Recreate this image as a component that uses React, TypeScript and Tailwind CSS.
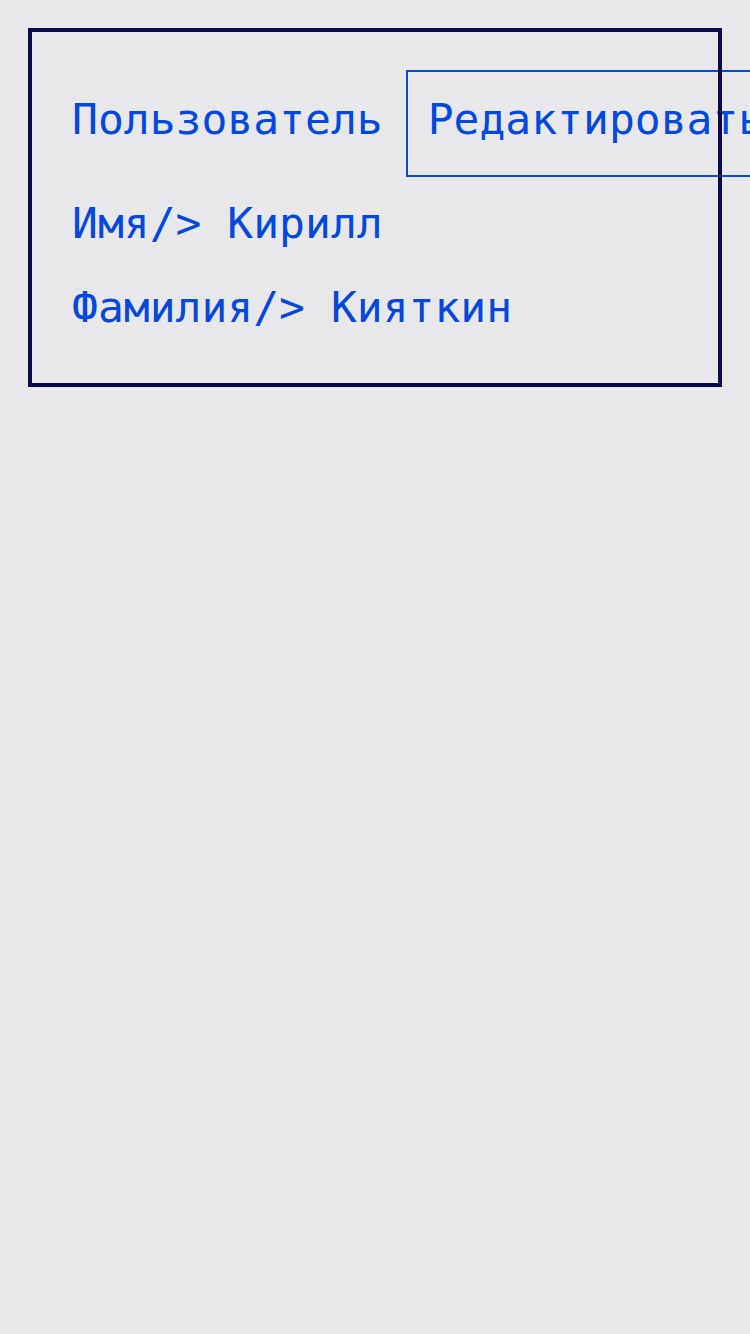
import React from 'react';

const App: React.FC = () => {
  return (
    <div className="min-h-[1334px] bg-[#e8e8ea] pt-[28px] px-[28px] overflow-hidden" style={{ fontFamily: '"DejaVu Sans Mono", monospace' }}>
      <div className="outline-4 outline-[#0b0a48] -outline-offset-4 pl-[44px] pt-[42px] pb-[55px] text-[43px] leading-[50px] text-[#0448de]">
        <div className="flex items-center">
          <span className="whitespace-nowrap pb-[9px]">Пользователь</span>
          <button className="ml-[23px] h-[107px] border-2 border-[#0448de] pl-[20px] pr-[20px] pb-[9px] whitespace-nowrap">
            Редактировать
          </button>
        </div>
        <p className="mt-[21px] whitespace-nowrap">Имя/&gt; Кирилл</p>
        <p className="mt-[34px] whitespace-nowrap">Фамилия/&gt; Кияткин</p>
      </div>
    </div>
  );
};

export default App;
